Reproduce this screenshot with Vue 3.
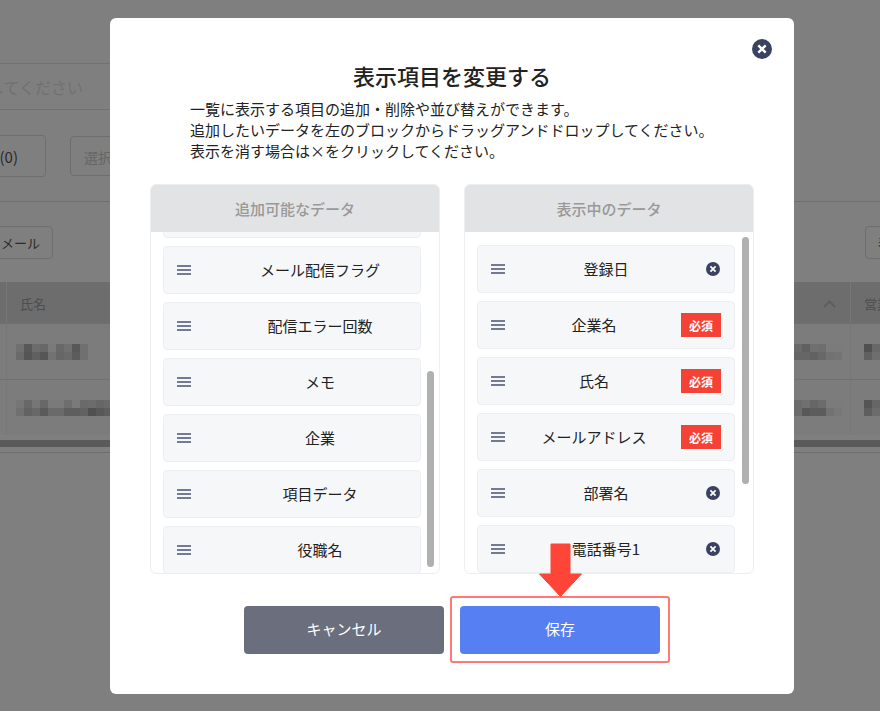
<script setup>
const leftItems = ['メール配信フラグ', '配信エラー回数', 'メモ', '企業', '項目データ', '役職名']
const rightItems = [
  { label: '登録日' },
  { label: '企業名', required: true },
  { label: '氏名', required: true },
  { label: 'メールアドレス', required: true },
  { label: '部署名' },
  { label: '電話番号1' }
]
const grey = (v) => ({ background: `rgb(${v * 2},${v * 2},${v * 2})` })
const row1Left = [0x70, 0x58, 0x6c, 0x68, 0x7a, 0x68, 0x70, 0x58, 0x70, 0x6a, 0x55, 0x60, 0x56, 0x72, 0x66, 0x6a, 0x5c, 0x70]
const row2Left = [0x76, 0x68, 0x76, 0x68, 0x7a, 0x7a, 0x6e, 0x7a, 0x6a, 0x6c, 0x66, 0x6a, 0x70, 0x62, 0x68, 0x5a, 0x6a, 0x6a, 0x5e, 0x5e, 0x62, 0x50, 0x58, 0x5e]
const row1Right = [0x6a, 0x60, 0x70, 0x6e, 0x7b, 0x7b, 0x66, 0x66, 0x62, 0x68, 0x72, 0x74]
const row2Right = [0x6c, 0x70, 0x66, 0x6c, 0x7b, 0x7b, 0x6c, 0x58, 0x5c, 0x5c, 0x72, 0x78]
const row1Edge = [0x50, 0x68, 0x60, 0x6e]
const row2Edge = [0x55, 0x66, 0x5e, 0x6c]
</script>

<template>
  <div class="page">
    <div class="search">してください</div>
    <div class="filters">
      <div class="filter-btn">絞込(0)</div>
      <div class="filter-select">選択してください</div>
    </div>
    <div class="rule"></div>
    <div class="actions">
      <div class="action-btn action-left">メール</div>
      <div class="action-btn action-right">表示</div>
    </div>
    <div class="table">
      <div class="tr th">
        <div class="c0"></div>
        <div class="c1"><span class="th-text">氏名</span></div>
        <div class="c2">
          <svg class="chevron" width="13" height="8" viewBox="0 0 13 8"><path d="M1 7l5.5-5.5L12 7" fill="none" stroke="#bdbdbd" stroke-width="2" /></svg>
        </div>
        <div class="c3"><span class="th-text">営業</span></div>
      </div>
      <div class="tr td">
        <div class="c0"></div>
        <div class="c1"><div class="mosaic mosaic-l"><i v-for="(v, i) in row1Left" :key="i" :style="grey(v)"></i></div></div>
        <div class="c2"><div class="mosaic mosaic-r"><i v-for="(v, i) in row1Right" :key="i" :style="grey(v)"></i></div></div>
        <div class="c3"><div class="mosaic mosaic-e"><i v-for="(v, i) in row1Edge" :key="i" :style="grey(v)"></i></div></div>
      </div>
      <div class="tr td last">
        <div class="c0"></div>
        <div class="c1"><div class="mosaic mosaic-l2"><i v-for="(v, i) in row2Left" :key="i" :style="grey(v)"></i></div></div>
        <div class="c2"><div class="mosaic mosaic-r"><i v-for="(v, i) in row2Right" :key="i" :style="grey(v)"></i></div></div>
        <div class="c3"><div class="mosaic mosaic-e"><i v-for="(v, i) in row2Edge" :key="i" :style="grey(v)"></i></div></div>
      </div>
    </div>
    <div class="hscroll"></div>
    <div class="foot-rule"></div>

    <div class="overlay"></div>

    <div class="modal">
      <button class="close" aria-label="閉じる">
        <svg width="20" height="20" viewBox="0 0 20 20"><circle cx="10" cy="10" r="10" fill="#3a4260" /><path d="M6.3 6.300l7.4 7.4M13.700 6.300l-7.4 7.4" stroke="#fff" stroke-width="2.4" /></svg>
      </button>
      <h2 class="title">表示項目を変更する</h2>
      <p class="desc">一覧に表示する項目の追加・削除や並び替えができます。<br />追加したいデータを左のブロックからドラッグアンドドロップしてください。<br />表示を消す場合は×をクリックしてください。</p>
      <div class="panels">
        <section class="panel">
          <header class="panel-head">追加可能なデータ</header>
          <div class="list list-left">
            <div class="item item-clipped"></div>
            <div v-for="name in leftItems" :key="name" class="item">
              <svg class="handle" width="14" height="10" viewBox="0 0 14 10"><path d="M0 1h14M0 5h14M0 9h14" stroke="#4a5270" stroke-width="1.6" /></svg>
              <span class="label label-left"><span>{{ name }}</span></span>
            </div>
            <div class="bar bar-left"></div>
          </div>
        </section>
        <section class="panel">
          <header class="panel-head">表示中のデータ</header>
          <div class="list list-right">
            <div v-for="row in rightItems" :key="row.label" class="item">
              <svg class="handle" width="14" height="10" viewBox="0 0 14 10"><path d="M0 1h14M0 5h14M0 9h14" stroke="#4a5270" stroke-width="1.6" /></svg>
              <span class="label"><span>{{ row.label }}</span></span>
              <span v-if="row.required" class="badge">必須</span>
              <svg v-else class="remove" width="16" height="16" viewBox="0 0 16 16"><circle cx="8" cy="8" r="7" fill="#3a4260" /><path d="M5.4 5.4l5.2 5.2M10.6 5.4l-5.2 5.2" stroke="#fff" stroke-width="1.8" /></svg>
            </div>
            <div class="bar bar-right"></div>
          </div>
        </section>
      </div>
      <div class="buttons">
        <button class="btn btn-cancel">キャンセル</button>
        <button class="btn btn-save">保存</button>
        <div class="highlight"></div>
        <svg class="arrow" width="45" height="55" viewBox="0 0 45 55"><path d="M13 1h19v30h11.500L22.500 53.500 1.500 31H13z" fill="#ff4438" stroke="#ff4438" stroke-width="1" stroke-linejoin="round" /></svg>
      </div>
    </div>
  </div>
</template>

<style>
html, body { margin: 0; padding: 0; }
</style>

<style scoped>
.page {
  position: relative;
  width: 880px;
  height: 711px;
  overflow: hidden;
  background: #fff;
  font-family: "Noto Sans CJK JP", "Noto Sans", sans-serif;
  color: #222;
}
.search {
  box-sizing: border-box;
  width: 760px;
  height: 47px;
  margin: 63px 0 0 -30px;
  padding-left: 17px;
  border: 1px solid #e4e4e4;
  font-size: 16px;
  line-height: 47px;
  color: #e2e2e2;
}
.filters {
  display: flex;
  gap: 24px;
  margin-top: 25px;
}
.filter-btn {
  box-sizing: border-box;
  width: 106px;
  height: 42px;
  margin-left: -60px;
  padding-right: 27px;
  border: 1px solid #ddd;
  border-radius: 4px;
  font-size: 15px;
  line-height: 42px;
  text-align: right;
  color: #555;
}
.filter-select {
  box-sizing: border-box;
  width: 300px;
  height: 40px;
  margin-top: 1px;
  padding-left: 13px;
  border: 1px solid #ddd;
  border-radius: 4px;
  font-size: 14px;
  line-height: 40px;
  color: #ccc;
}
.rule {
  height: 1px;
  margin-top: 24px;
  background: #e0e0e0;
}
.actions {
  display: flex;
  justify-content: space-between;
  margin-top: 24px;
}
.action-btn {
  box-sizing: border-box;
  height: 33px;
  border: 1px solid #ddd;
  border-radius: 4px;
  font-size: 13px;
  line-height: 31px;
  color: #555;
}
.action-left {
  width: 83px;
  margin-left: -30px;
  padding-left: 30px;
}
.action-right {
  width: 60px;
  margin-right: -45px;
  padding-left: 12px;
}
.table {
  margin-top: 23px;
}
.tr {
  display: flex;
}
.th {
  height: 41px;
  background: #dadada;
  font-size: 13px;
  color: #9c9c9c;
}
.td {
  height: 56px;
  background: #f8f8f8;
  border-top: 1px solid #e0e0e0;
  box-sizing: border-box;
}
.c0, .c1, .c2 {
  box-sizing: border-box;
  border-right: 1px solid #eeeeee;
}
.c0 { width: 7px; }
.c1 { width: 393px; padding-left: 9px; }
.c2 { width: 451px; position: relative; }
.c3 { flex: 1; padding-left: 13px; white-space: nowrap; overflow: hidden; }
.th-text {
  display: block;
  margin-top: 7px;
  line-height: 30px;
}
.th .c1 { padding-left: 13px; }
.chevron {
  position: absolute;
  top: 18px;
  right: 14px;
}
.mosaic {
  display: grid;
  grid-auto-rows: 8px;
  margin-top: 20px;
}
.mosaic i { display: block; }
.mosaic-l { grid-template-columns: repeat(9, 8px); }
.mosaic-l2 { grid-template-columns: repeat(12, 8px); width: 96px; }
.mosaic-r { grid-template-columns: repeat(6, 8px); position: absolute; left: 394px; }
.mosaic-e { grid-template-columns: repeat(2, 8px); }
.hscroll {
  height: 7px;
  margin-top: 5px;
  background: #b4b4b4;
}
.foot-rule {
  height: 1px;
  margin-top: 5px;
  background: #dedede;
}
.overlay {
  position: absolute;
  inset: 0;
  background: rgba(0, 0, 0, 0.5);
}
.modal {
  position: absolute;
  left: 110px;
  top: 18px;
  box-sizing: border-box;
  width: 684px;
  height: 676px;
  padding: 41px 40px 0;
  background: #fff;
  border-radius: 6px;
}
.close {
  position: absolute;
  top: 21px;
  right: 22px;
  width: 20px;
  height: 20px;
  padding: 0;
  border: 0;
  background: none;
  line-height: 0;
}
.title {
  margin: 0;
  font-size: 22px;
  line-height: 32px;
  font-weight: 500;
  text-align: center;
  color: #222;
}
.desc {
  margin: 7px 0 0;
  padding-left: 40px;
  font-size: 15px;
  line-height: 21px;
  color: #222;
}
.panels {
  display: flex;
  gap: 24px;
  margin-top: 23px;
}
.panel {
  box-sizing: border-box;
  width: 290px;
  height: 390px;
  border: 1px solid #eceef0;
  border-radius: 6px;
  overflow: hidden;
}
.panel-head {
  height: 47px;
  background: #e2e3e5;
  font-size: 15px;
  font-weight: 500;
  line-height: 48px;
  text-align: center;
  color: #999;
}
.list {
  position: relative;
  box-sizing: border-box;
  height: 341px;
  padding: 0 18px 0 12px;
  overflow: hidden;
}
.list-right { padding-top: 13px; }
.item {
  box-sizing: border-box;
  display: flex;
  align-items: center;
  height: 48px;
  margin-bottom: 8px;
  padding: 0 13px;
  background: #f6f7f9;
  border: 1px solid #eceef1;
  border-radius: 4px;
}
.item-clipped { margin-top: -42px; }
.handle { flex: none; }
.label {
  flex: 1;
  display: flex;
  justify-content: center;
  min-width: 0;
  margin-left: 43px;
  font-size: 15px;
  line-height: 24px;
  white-space: nowrap;
  color: #222;
}
.label span { flex: none; }
.label-left { margin-right: 1px; }
.remove { flex: none; margin-left: 41px; }
.badge {
  flex: none;
  width: 40px;
  height: 24px;
  margin-left: 41px;
  background: #f44336;
  font-size: 12px;
  font-weight: 700;
  line-height: 25px;
  text-align: center;
  color: #fff;
}
.bar {
  position: absolute;
  width: 7px;
  border-radius: 4px;
  background: #b0b0b0;
}
.bar-left { top: 139px; height: 196px; left: 276px; }
.bar-right { top: 5px; height: 247px; left: 277px; }
.buttons {
  position: relative;
  display: flex;
  justify-content: center;
  gap: 16px;
  margin-top: 32px;
}
.btn {
  width: 200px;
  height: 48px;
  padding: 0 0 3px;
  border: 0;
  border-radius: 4px;
  font-family: inherit;
  font-size: 15px;
  color: #fff;
}
.btn-cancel { background: #6b6e7d; }
.btn-save { background: #5680f2; }
.highlight {
  position: absolute;
  left: 300px;
  top: -10px;
  box-sizing: border-box;
  width: 220px;
  height: 67px;
  border: 2px solid #ff7875;
  border-radius: 3px;
}
.arrow {
  position: absolute;
  left: 388px;
  top: -63px;
}
</style>
